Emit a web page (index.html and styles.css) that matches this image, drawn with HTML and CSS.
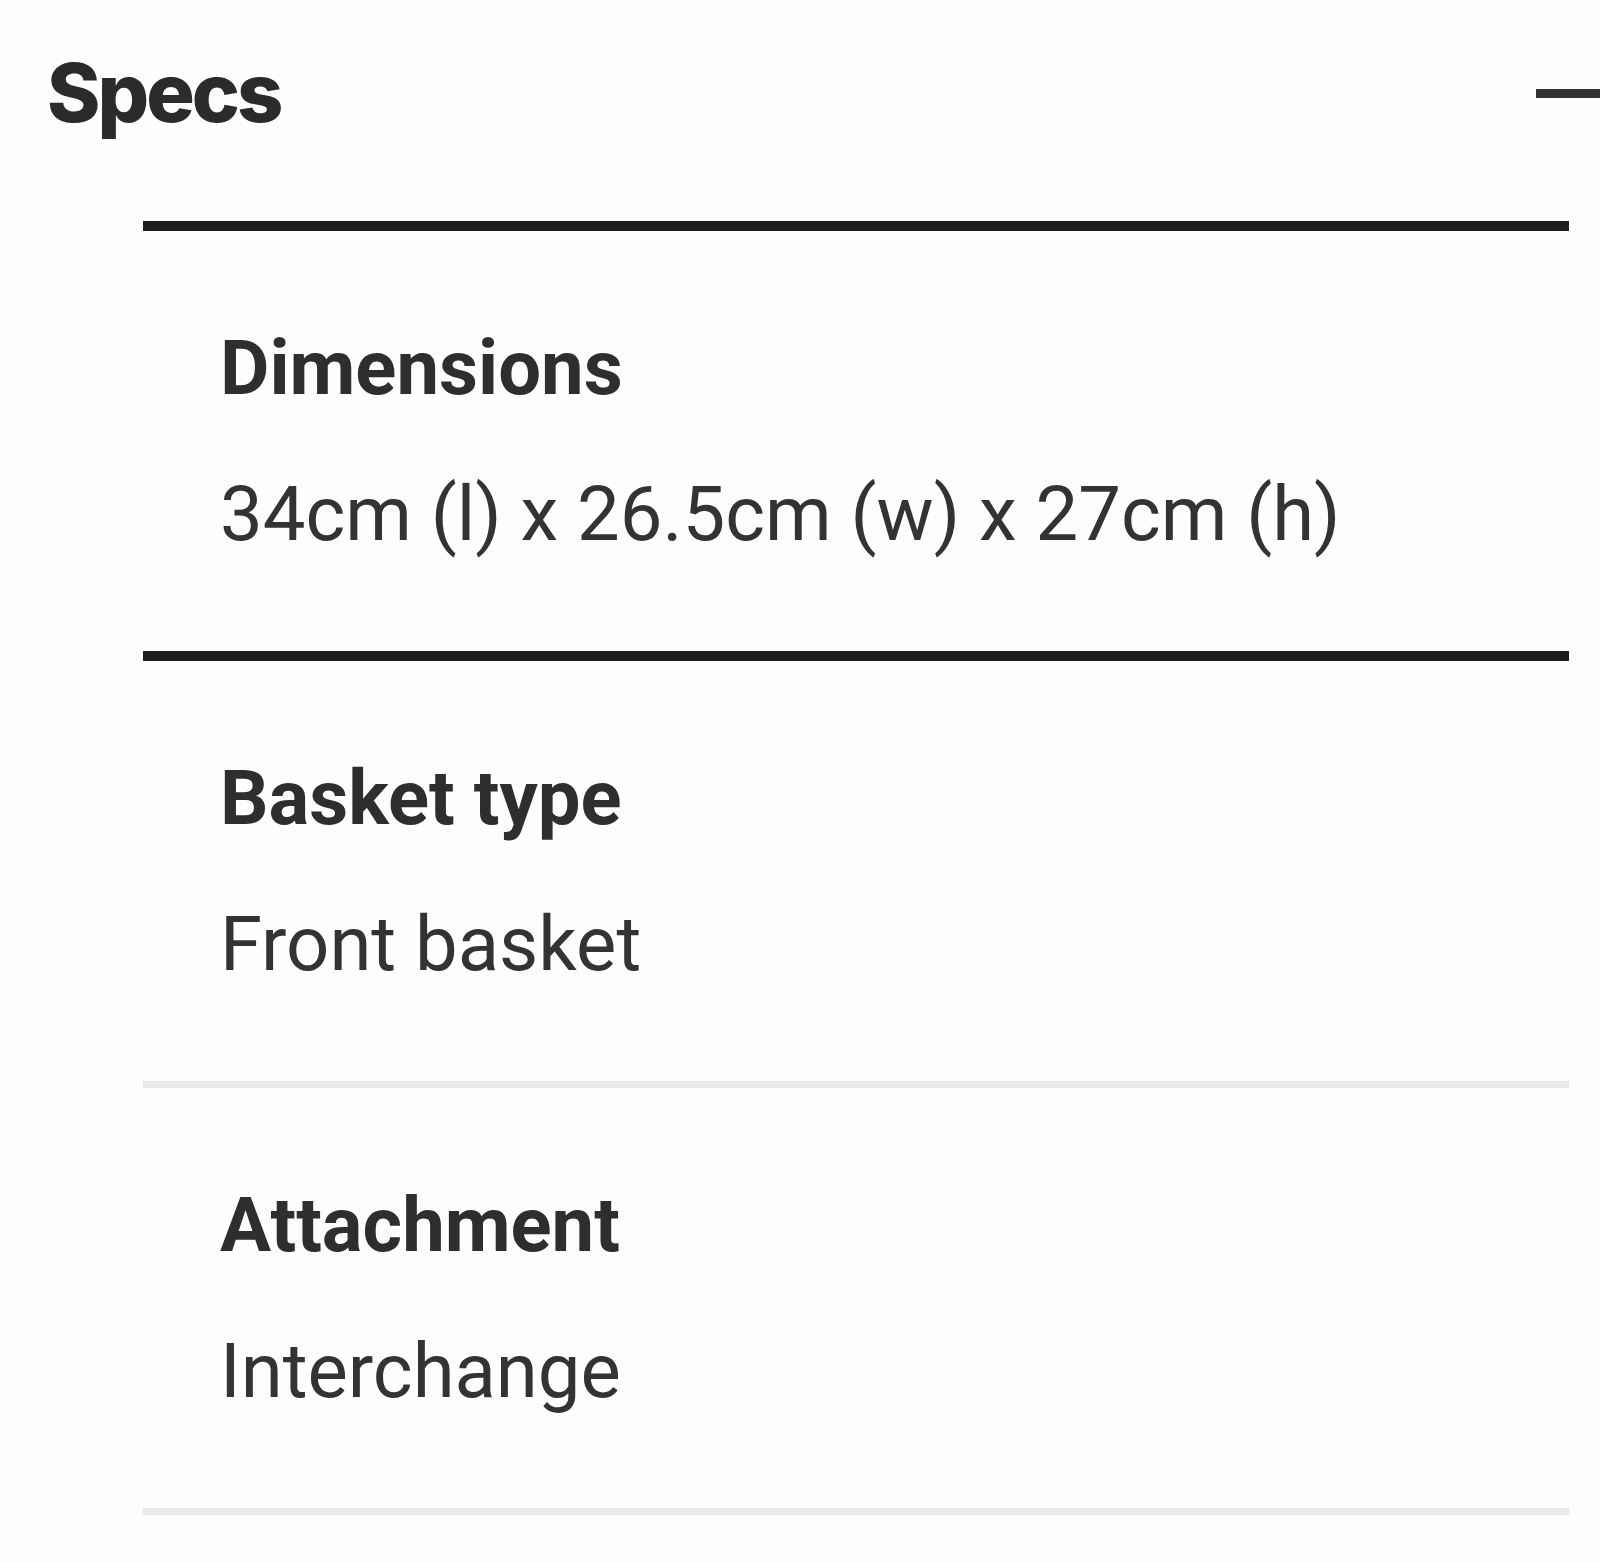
FILE: index.html
```html
<!DOCTYPE html>
<html lang="en">
<head>
    <meta charset="UTF-8">
    <meta name="viewport" content="width=device-width, initial-scale=1.0">
    <title>Specs</title>

    <!-- Style CSS -->
    <link rel="stylesheet" href="styles.css">
</head>
<body>
    <section class="specs">
        <div class="specs-head">
            <h2 class="specs-title">Specs</h2>
            <span class="toggle" aria-label="Collapse"></span>
        </div>
        <ul class="spec-list">
            <li class="spec-item spec-item--active">
                <h3 class="spec-label">Dimensions</h3>
                <p class="spec-value">34cm (l) x 26.5cm (w) x 27cm (h)</p>
            </li>
            <li class="spec-item spec-item--active">
                <h3 class="spec-label">Basket type</h3>
                <p class="spec-value">Front basket</p>
            </li>
            <li class="spec-item">
                <h3 class="spec-label">Attachment</h3>
                <p class="spec-value">Interchange</p>
            </li>
        </ul>
    </section>
</body>
</html>
```

FILE: styles.css
```css
* {
    margin: 0;
    padding: 0;
    box-sizing: border-box;
}

body {
    font-family: 'Roboto', sans-serif;
    background: #fdfdfd;
    color: #2e2e2e;
    overflow-x: hidden;
}

.specs {
    width: 100%;
}

.specs-head {
    display: flex;
    justify-content: space-between;
    align-items: center;
    padding: 43px 0 0 47px;
    margin-right: -8px;
}

.specs-title {
    font-family: 'Inter', sans-serif;
    font-size: 81px;
    font-weight: 800;
    line-height: 100px;
    letter-spacing: -3px;
    color: #2b2b2b;
}

.toggle {
    display: block;
    width: 72px;
    height: 9px;
    background-color: #333;
}

.spec-list {
    list-style: none;
    margin: 78px 31px 0 143px;
    border-bottom: 7px solid #e9e9e9;
}

.spec-item {
    display: flex;
    flex-direction: column;
    gap: 56px;
    padding: 92px 0 92px 77px;
    border-top: 7px solid #e9e9e9;
}

.spec-item--active {
    border-top: 10px solid #1e1e1e;
}

.spec-label {
    font-size: 76px;
    font-weight: 700;
    line-height: 90px;
    color: #2e2e2e;
}

.spec-value {
    font-size: 76px;
    font-weight: 400;
    line-height: 90px;
    color: #333;
}
```
